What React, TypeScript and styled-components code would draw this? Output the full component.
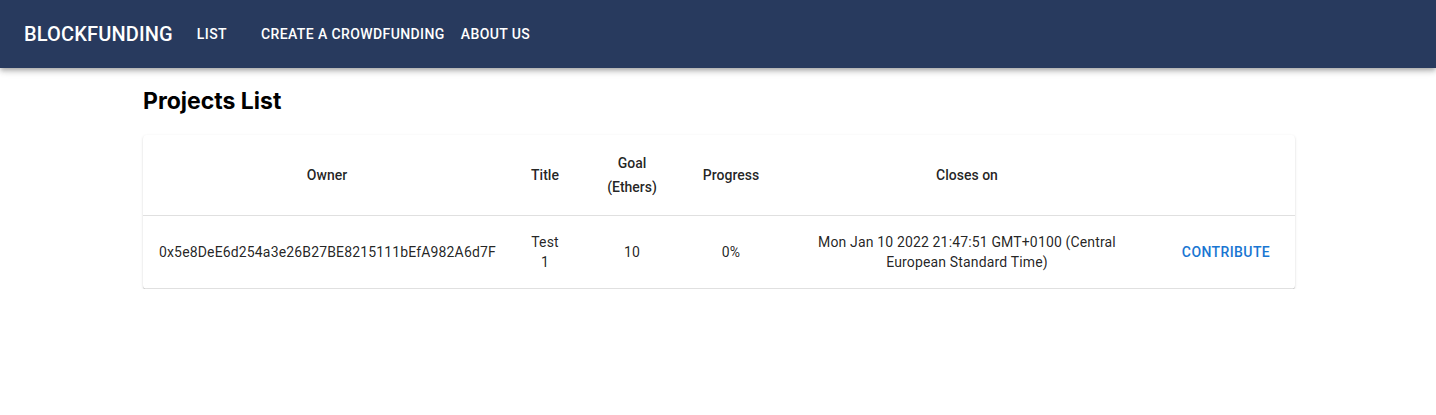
import React from "react";
import styled, { createGlobalStyle } from "styled-components";

const GlobalStyle = createGlobalStyle`
  html, body { margin: 0; padding: 0; background: #fff; }
  body { font-family: Roboto, "Liberation Sans", Arial, sans-serif; color: rgba(0,0,0,0.87); }
  * { box-sizing: border-box; }
`;

const AppBar = styled.header`
  background: #283a5e;
  color: #fff;
  box-shadow: 0px 2px 4px -1px rgba(0,0,0,0.2), 0px 4px 5px 0px rgba(0,0,0,0.14), 0px 1px 10px 0px rgba(0,0,0,0.12);
  position: relative;
  z-index: 1;
`;

const Toolbar = styled.div`
  height: 68px;
  padding: 0 24px;
  display: flex;
  align-items: center;
`;

const Logo = styled.div`
  font-family: Roboto, sans-serif;
  font-size: 20px;
  font-weight: 500;
  letter-spacing: 0.15px;
  line-height: 1.6;
  margin-right: 7px;
`;

const NavButton = styled.button<{ $after?: number }>`
  background: transparent;
  border: 0;
  color: #fff;
  font-family: Roboto, sans-serif;
  font-size: 14px;
  font-weight: 500;
  letter-spacing: 0.4px;
  line-height: 1.75;
  text-transform: uppercase;
  padding: 6px 8px;
  min-width: 64px;
  border-radius: 4px;
  cursor: pointer;
  margin-right: ${(p) => p.$after ?? 0}px;
`;

const Main = styled.main`
  max-width: 1200px;
  margin: 0 auto;
  padding: 0 23px 0 25px;
`;

const Heading = styled.h1`
  font-family: Inter, Roboto, sans-serif;
  font-size: 23px;
  font-weight: 700;
  line-height: 32px;
  margin: 17px 0 18px;
  color: #000;
`;

const Paper = styled.div`
  background: #fff;
  border-radius: 4px;
  box-shadow: 0px 2px 1px -1px rgba(0,0,0,0.2), 0px 1px 1px 0px rgba(0,0,0,0.14), 0px 1px 3px 0px rgba(0,0,0,0.12);
  overflow: hidden;
`;

const Table = styled.table`
  width: 100%;
  border-collapse: collapse;
  table-layout: fixed;
`;

const HeadCell = styled.th`
  font-family: Roboto, sans-serif;
  font-size: 14px;
  font-weight: 500;
  line-height: 24px;
  padding: 16px;
  text-align: center;
  color: rgba(0,0,0,0.87);
  border-bottom: 1px solid rgba(224,224,224,1);
`;

const BodyCell = styled.td`
  font-family: Roboto, sans-serif;
  font-size: 14px;
  font-weight: 400;
  line-height: 20px;
  letter-spacing: 0.15px;
  padding: 16px;
  text-align: center;
  color: rgba(0,0,0,0.87);
  border-bottom: 1px solid rgba(224,224,224,1);
`;

const TextButton = styled.button`
  background: transparent;
  border: 0;
  color: #1976d2;
  font-family: Roboto, sans-serif;
  font-size: 14px;
  font-weight: 500;
  letter-spacing: 0.4px;
  line-height: 1.75;
  text-transform: uppercase;
  padding: 6px 8px;
  min-width: 64px;
  border-radius: 4px;
  cursor: pointer;
`;

const columns = [368, 68, 106, 92, 380, 138];

export default function App() {
  return (
    <>
      <GlobalStyle />
      <AppBar>
        <Toolbar>
          <Logo>BLOCKFUNDING</Logo>
          <NavButton $after={9}>List</NavButton>
          <NavButton $after={0}>Create a crowdfunding</NavButton>
          <NavButton>About us</NavButton>
        </Toolbar>
      </AppBar>
      <Main>
        <Heading>Projects List</Heading>
        <Paper>
          <Table>
            <colgroup>
              {columns.map((w, i) => (
                <col key={i} style={{ width: w }} />
              ))}
            </colgroup>
            <thead>
              <tr>
                <HeadCell>Owner</HeadCell>
                <HeadCell>Title</HeadCell>
                <HeadCell>Goal (Ethers)</HeadCell>
                <HeadCell>Progress</HeadCell>
                <HeadCell>Closes on</HeadCell>
                <HeadCell></HeadCell>
              </tr>
            </thead>
            <tbody>
              <tr>
                <BodyCell>0x5e8DeE6d254a3e26B27BE8215111bEfA982A6d7F</BodyCell>
                <BodyCell>Test 1</BodyCell>
                <BodyCell>10</BodyCell>
                <BodyCell>0%</BodyCell>
                <BodyCell>Mon Jan 10 2022 21:47:51 GMT+0100 (Central European Standard Time)</BodyCell>
                <BodyCell>
                  <TextButton>Contribute</TextButton>
                </BodyCell>
              </tr>
            </tbody>
          </Table>
        </Paper>
      </Main>
    </>
  );
}
